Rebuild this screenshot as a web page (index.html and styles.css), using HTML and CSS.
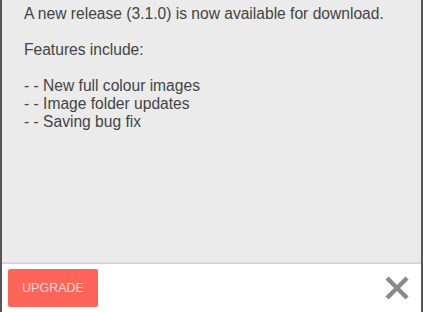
FILE: index.html
```html
<!DOCTYPE html>
<html>
<head>
<meta charset="utf-8">
<link rel="stylesheet" href="styles.css">
</head>
<body>
<div class="dialog">
  <div class="content">
    <p>A new release (3.1.0) is now available for download.</p>
    <p>Features include:</p>
    <ul class="features">
      <li>- New full colour images</li>
      <li>- Image folder updates</li>
      <li>- Saving bug fix</li>
    </ul>
  </div>
  <div class="footer">
    <button class="upgrade">UPGRADE</button>
    <button class="close" aria-label="Close">
      <svg width="26" height="24" viewBox="0 0 26 24">
        <path d="M3 2 L23 22 M23 2 L3 22" stroke="#8a8a8a" stroke-width="4.5" stroke-linecap="butt" fill="none"/>
      </svg>
    </button>
  </div>
</div>
</body>
</html>
```

FILE: styles.css
```css
html, body {
  margin: 0;
  padding: 0;
  background: #ffffff;
}
.dialog {
  box-sizing: border-box;
  width: 423px;
  height: 312px;
  border-left: 2px solid #555555;
  border-right: 2px solid #555555;
  display: flex;
  flex-direction: column;
  font-family: "Liberation Sans", Arial, sans-serif;
}
.content {
  flex: 1;
  background: #ebebeb;
  padding: 5px 22px 0;
  color: #444444;
  font-size: 15.6px;
  line-height: 18px;
}
.content p {
  margin: 0 0 18px;
}
.features {
  list-style: none;
  margin: 0;
  padding: 0;
}
.features li::before {
  content: "- ";
}
.footer {
  height: 49px;
  box-sizing: border-box;
  border-top: 1px solid #d2d2d2;
  box-shadow: 0 -1px 0 #dcdcdc;
  background: #ffffff;
  display: flex;
  align-items: flex-start;
  justify-content: space-between;
  padding: 5px 11px 0 6px;
}
.upgrade {
  width: 90px;
  height: 38px;
  background: #ff6459;
  border: none;
  border-radius: 2px;
  color: #ffdcd8;
  font-family: "Liberation Sans", Arial, sans-serif;
  font-size: 12.5px;
  padding: 0;
}
.close {
  background: none;
  border: none;
  padding: 0;
  display: flex;
  margin-top: 7px;
}
```
